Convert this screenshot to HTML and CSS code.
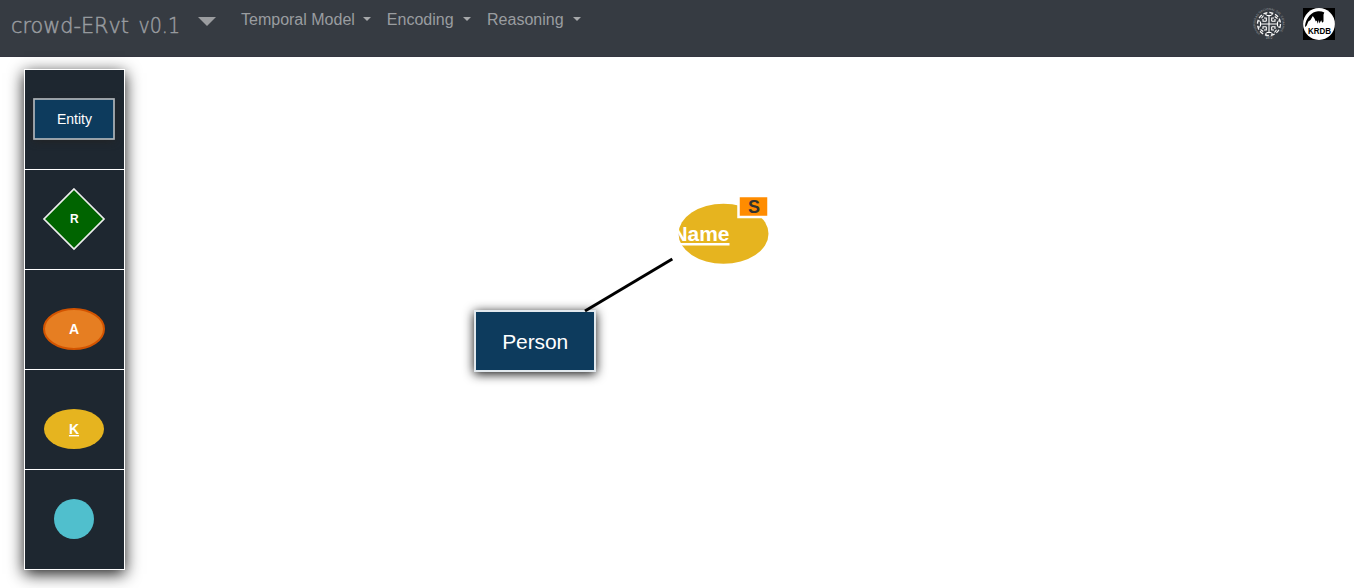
FILE: index.html
```html
<!DOCTYPE html>
<html lang="en">
<head>
<meta charset="utf-8">
<title>crowd-ERvt v0.1</title>
<link rel="stylesheet" href="styles.css">
</head>
<body>
<header class="navbar">
  <a class="brand">
    <svg width="176" height="30" viewBox="0 0 176 30">
      <text class="brand-text" x="0" y="22.800" textLength="118" lengthAdjust="spacingAndGlyphs">crowd-ERvt</text>
      <text class="brand-text" x="127.500" y="22.800" textLength="41.500" lengthAdjust="spacingAndGlyphs">v0.1</text>
    </svg>
  </a>
  <span class="brand-caret"></span>
  <nav class="menu">
    <a class="menu-item">Temporal Model</a>
    <a class="menu-item">Encoding</a>
    <a class="menu-item">Reasoning</a>
  </nav>
  <div class="logos">
    <svg width="32" height="32" viewBox="0 0 32 32">
      <defs>
        <path id="ring" d="M7.2 25.800A13.500 13.500 0 1 1 24.800 25.800"/>
        <path id="arm" d="M16 16V7.500M13.500 7.500H18.500M13.300 13.300V10H11M18.700 13.300V10H21M13 5V7M19 5V7M8.500 10.300L10.500 7.500"/>
      </defs>
      <text class="ring-text"><textPath href="#ring" textLength="62">UNIVERSIDAD NACIONAL DEL COMAHUE</textPath></text>
      <circle cx="16" cy="16" r="11.500" fill="none" stroke="#f4f4f4" stroke-width="1.300" stroke-dasharray="4 2.020"/>
      <g class="crest">
        <use href="#arm"/>
        <use href="#arm" transform="rotate(90 16 16)"/>
        <use href="#arm" transform="rotate(180 16 16)"/>
        <use href="#arm" transform="rotate(270 16 16)"/>
      </g>
      <text class="year-text" x="16" y="31.200">1972</text>
    </svg>
    <svg width="32" height="32" viewBox="0 0 32 32">
      <rect width="32" height="32" fill="#000"/>
      <circle cx="16" cy="16" r="15.900" fill="#fff"/>
      <path d="M2 18C3 10 8.500 3.700 15 3.300C17.400 3.100 19.300 3.500 21.300 4.400L20.500 6.500V13.500L19.200 14.700L18.200 12.300L16.400 15.500L15.800 12L14.800 15.700L13.700 12.500L12.800 13.500L11.500 10.500L9.800 8L7.500 12L5.300 13.500L3.700 17.500L2.200 19Z" fill="#000"/>
      <text class="krdb-text" x="5" y="25.600" textLength="23" lengthAdjust="spacingAndGlyphs">KRDB</text>
    </svg>
  </div>
</header>
<main class="workspace">
  <aside class="palette">
    <div class="cell">
      <svg width="100" height="100" viewBox="0 0 100 100">
        <rect class="entity-glow" x="9" y="29" width="80" height="40"/>
        <rect class="entity-small" x="9" y="29" width="80" height="40"/>
        <text class="label entity-label" x="49.500" y="54">Entity</text>
      </svg>
    </div>
    <div class="cell">
      <svg width="100" height="100" viewBox="0 0 100 100">
        <path class="relation" d="M49 19L79 49L49 79L19 49Z"/>
        <text class="label relation-label" x="49.400" y="53">R</text>
      </svg>
    </div>
    <div class="cell">
      <svg width="100" height="100" viewBox="0 0 100 100">
        <ellipse class="attribute" cx="49" cy="59" rx="30" ry="20"/>
        <text class="label attribute-label" x="49" y="64">A</text>
      </svg>
    </div>
    <div class="cell">
      <svg width="100" height="100" viewBox="0 0 100 100">
        <ellipse class="key" cx="49" cy="59" rx="30" ry="20"/>
        <text class="label key-label" x="49" y="64">K</text>
      </svg>
    </div>
    <div class="cell">
      <svg width="100" height="99" viewBox="0 0 100 99">
        <circle class="isa" cx="49" cy="49" r="20"/>
      </svg>
    </div>
  </aside>
  <svg class="diagram" width="1229" height="531" viewBox="125 57 1229 531">
    <rect class="entity" x="475" y="311" width="120" height="60"/>
    <text class="entity-name" x="535.200" y="349" textLength="66">Person</text>
    <path class="link" d="M585 311L672.300 259"/>
    <ellipse class="key" cx="723.500" cy="233.800" rx="45" ry="30"/>
    <text class="key-name" x="672.500" y="241" textLength="57">Name</text>
    <rect class="key-line" x="672.500" y="243" width="57" height="2.500"/>
    <rect class="stamp" x="738.500" y="196" width="30" height="21"/>
    <text class="stamp-label" x="754" y="213">S</text>
  </svg>
</main>
</body>
</html>
```
FILE: styles.css
```css
* { box-sizing: border-box; }
body {
  margin: 0;
  height: 588px;
  overflow: hidden;
  background: #fff;
  font-family: "Liberation Sans", Arial, sans-serif;
}
svg { display: block; overflow: visible; }
.navbar {
  display: flex;
  align-items: flex-start;
  height: 57px;
  padding: 8px 19px 0 11px;
  background: #363b42;
  border-bottom: 1px solid #343640;
}
.brand { padding-top: 2px; }
.brand-text {
  font-family: "DejaVu Sans", sans-serif;
  font-weight: 200;
  font-size: 22px;
  fill: #999ca0;
  stroke: #999ca0;
  stroke-width: .5;
}
.brand-caret {
  margin: 9px 0 0 11px;
  border: 9px solid transparent;
  border-top-color: #9b9da0;
  border-bottom: 0;
}
.menu {
  display: flex;
  gap: 16px;
  margin-left: 25px;
  color: #9a9da0;
  font-size: 16px;
  line-height: 24px;
}
.menu-item::after {
  content: "";
  display: inline-block;
  margin-left: 9px;
  vertical-align: 4px;
  border: 4.8px solid transparent;
  border-top-color: #a6a8aa;
  border-bottom: 0;
}
.menu-item:first-child::after { margin-left: 8px; }
.menu-item:nth-child(2)::after { margin-left: 9.5px; }
.logos {
  display: flex;
  gap: 18px;
  margin-left: auto;
}
.ring-text { font-size: 3px; fill: #a0a3a7; }
.year-text { font-size: 3px; fill: #b8babd; text-anchor: middle; }
.crest { fill: none; stroke: #fff; stroke-width: 1.1; }
.krdb-text { font-size: 9.3px; font-weight: 700; fill: #000; }
.workspace { display: flex; height: 531px; }
.palette {
  flex: none;
  width: 101px;
  height: 501px;
  margin: 12px 0 0 24px;
  border: 1px solid #fff;
  background: #1e2730;
  box-shadow: 0 4px 15px rgba(0, 0, 0, .9);
}
.cell { height: 100px; border-bottom: 1px solid #fff; }
.cell:last-child { height: 99px; border-bottom: 0; }
.label { fill: #fff; text-anchor: middle; }
.entity-glow { fill: #1b2026; filter: drop-shadow(0 2px 4px #222222); }
.entity-small { fill: #0d3b5d; stroke: #b0b5b9; stroke-width: 1.7; }
.entity-label { font-size: 14px; }
.relation { fill: #006400; stroke: #eee; stroke-width: 1.7; }
.relation-label { font-size: 12px; font-weight: 700; }
.attribute { fill: #e67e22; stroke: #d35400; stroke-width: 2; }
.attribute-label { font-size: 14px; font-weight: 700; }
.key { fill: #e6b41f; }
.key-label { font-size: 14px; font-weight: 700; text-decoration: underline; }
.isa { fill: #50bfcd; }
.diagram { flex: none; }
.entity {
  fill: #0d3b5d;
  stroke: #e2e9ee;
  stroke-width: 2;
  filter: drop-shadow(0 2px 5.5px rgba(0, 0, 0, .95));
}
.entity-name { fill: #fff; font-size: 21px; text-anchor: middle; }
.link { fill: none; stroke: #000; stroke-width: 3; }
.key-name { fill: #fff; font-size: 21px; font-weight: 700; }
.key-line { fill: #fff; }
.stamp { fill: #ff8c00; stroke: #fff; stroke-width: 2.5; }
.stamp-label { fill: #31332e; font-size: 18px; font-weight: 700; text-anchor: middle; }
```
